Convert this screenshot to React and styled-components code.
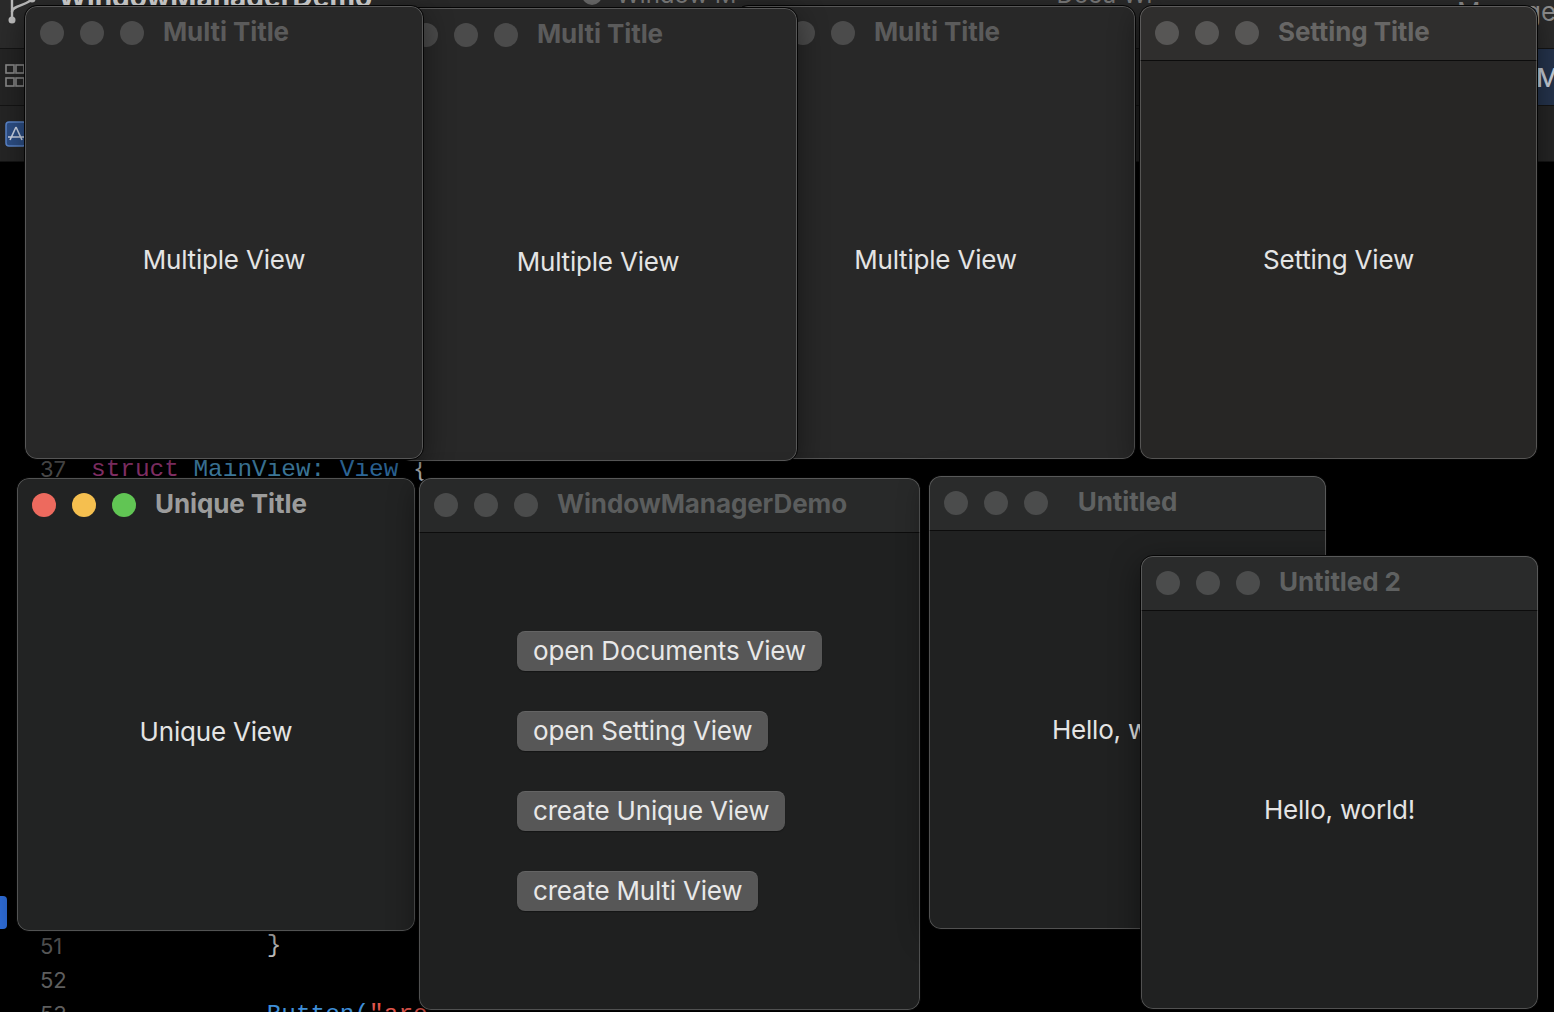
import React from "react";
import styled, { createGlobalStyle } from "styled-components";

const Global = createGlobalStyle`
  html, body { margin: 0; padding: 0; background: #000; }
  body { width: 1554px; height: 1012px; overflow: hidden; font-family: Inter, "Noto Sans", sans-serif; }
  #root { width: 1554px; height: 1012px; }
`;

const Desktop = styled.div`
  position: relative;
  width: 1554px;
  height: 1012px;
  overflow: hidden;
  background: #000;
`;

/* ---------- Xcode backdrop ---------- */
const Backdrop = styled.div`
  display: flex;
  flex-direction: column;
  width: 100%;
  height: 100%;
`;

const TopBar = styled.div`
  height: 48px;
  flex: none;
  display: flex;
  align-items: flex-start;
  background: #2b2b2b;
  border-bottom: 1px solid #141414;
  overflow: hidden;
`;

const Branch = styled.svg`
  flex: none;
  margin-left: 8px;
  margin-top: -4px;
`;

const ProjectName = styled.div`
  margin-left: 20px;
  margin-top: -20px;
  font-size: 28px;
  font-weight: 700;
  color: #d8d8d8;
`;

const TabHint = styled.div`
  display: flex;
  align-items: center;
  gap: 14px;
  margin-left: ${(p) => p.$ml}px;
  margin-top: -20px;
  font-size: 24px;
  color: #7c7c7c;
  white-space: nowrap;
`;

const HintDot = styled.span`
  width: 20px;
  height: 20px;
  border-radius: 50%;
  background: #6a6a6a;
`;

const RightHint = styled.div`
  margin-left: auto;
  margin-right: -12px;
  margin-top: -4px;
  font-size: 26px;
  color: #8e8e8e;
  white-space: nowrap;
`;

const Bar = styled.div`
  height: ${(p) => p.$h}px;
  flex: none;
  display: flex;
  align-items: center;
  justify-content: space-between;
  background: ${(p) => p.$bg};
  border-bottom: 1px solid #141414;
  overflow: hidden;
`;

const BarIcon = styled.svg`
  flex: none;
  margin-left: 5px;
`;

const EditorTab = styled.div`
  flex: none;
  width: 220px;
  margin-right: -202px;
  align-self: stretch;
  display: flex;
  align-items: center;
  background: #25344d;
  color: #c9d0db;
  font-size: 26px;
  font-weight: 500;
`;

const Editor = styled.div`
  flex: 1;
  position: relative;
  background: #000;
  padding-top: 290px;
`;

const Marker = styled.div`
  position: absolute;
  left: 0;
  top: 734px;
  width: 7px;
  height: 33px;
  border-radius: 0 4px 4px 0;
  background: #2f6edb;
`;

const CodeLine = styled.div`
  height: 34.07px;
  display: flex;
  align-items: center;
  white-space: pre;
`;

const LineNo = styled.span`
  width: 40px;
  padding-left: 40px;
  flex: none;
  font-family: Inter, sans-serif;
  font-size: 22px;
  color: #5e5e5e;
`;

const Code = styled.span`
  margin-left: 11px;
  font-family: "Liberation Mono", "DejaVu Sans Mono", monospace;
  font-size: 24.4px;
  color: #d9d9d9;
`;

const Tok = styled.span`
  color: ${(p) => p.$c};
`;

/* ---------- Windows ---------- */
const Win = styled.div`
  position: absolute;
  left: ${(p) => p.$x}px;
  top: ${(p) => p.$y}px;
  width: ${(p) => p.$w}px;
  height: ${(p) => p.$h}px;
  z-index: ${(p) => p.$z};
  box-sizing: border-box;
  display: flex;
  flex-direction: column;
  border: 1px solid #050505;
  border-radius: 13px;
  background: ${(p) => p.$body};
  overflow: hidden;
  box-shadow: 0 8px 30px rgba(0, 0, 0, 0.45);
  &::after {
    content: "";
    position: absolute;
    inset: 0;
    border-radius: 12px;
    box-shadow: inset 0 0 0 1px rgba(255, 255, 255, 0.22);
    pointer-events: none;
  }
`;

const TitleBar = styled.div`
  flex: none;
  height: 54px;
  display: flex;
  align-items: center;
  padding: 0 15px;
  background: ${(p) => p.$bg || "transparent"};
  border-bottom: 1px solid ${(p) => (p.$sep ? "#0c0c0c" : "transparent")};
`;

const Lights = styled.div`
  flex: none;
  display: flex;
  gap: 16px;
  margin-top: -1px;
`;

const Light = styled.span`
  width: 24px;
  height: 24px;
  border-radius: 50%;
  background: ${(p) => p.$c};
`;

const Title = styled.div`
  flex: 1 0 auto;
  padding: 0 19px;
  margin-top: -3px;
  text-align: center;
  font-size: 26px;
  font-weight: 700;
  color: ${(p) => p.$c};
  white-space: nowrap;
  letter-spacing: -0.1px;
`;

const TitleBalance = styled.span`
  flex: 0 1 104px;
  min-width: 0;
`;

const Body = styled.div`
  flex: 1;
  display: flex;
  align-items: center;
  justify-content: center;
  color: #e4e4e4;
  font-size: 26px;
  letter-spacing: -0.2px;
  white-space: nowrap;
  padding-bottom: 2px;
`;

const ButtonStack = styled.div`
  display: flex;
  flex-direction: column;
  align-items: flex-start;
  gap: 40px;
`;

const MacButton = styled.button`
  height: 40px;
  padding: 0 16px;
  border: none;
  border-radius: 8px;
  background: #575757;
  box-shadow: inset 0 1px 0 rgba(255, 255, 255, 0.08), 0 1px 1px rgba(0, 0, 0, 0.35);
  color: #e8e8e8;
  font-family: Inter, sans-serif;
  font-size: 26px;
  letter-spacing: -0.2px;
  line-height: 40px;
  white-space: nowrap;
`;

const INACTIVE = ["#4b4b4b", "#4b4b4b", "#4b4b4b"];
const ACTIVE = ["#ed6a5e", "#f5bf4f", "#61c554"];

function MacWindow({ x, y, w, h, z, title, titleColor, body, bar, sep, lights = INACTIVE, lightColor, children }) {
  const lc = lightColor ? [lightColor, lightColor, lightColor] : lights;
  return (
    <Win $x={x} $y={y} $w={w} $h={h} $z={z} $body={body}>
      <TitleBar $bg={bar} $sep={sep}>
        <Lights>
          {lc.map((c, i) => (
            <Light key={i} $c={c} />
          ))}
        </Lights>
        <Title $c={titleColor}>{title}</Title>
        <TitleBalance />
      </TitleBar>
      <Body>{children}</Body>
    </Win>
  );
}

const lines = [
  { n: 37, code: [["struct ", "#a93e84"], ["MainView: ", "#4f9cc8"], ["View ", "#3c88c8"], ["{", "#dcdcdc"]] },
  ...Array.from({ length: 13 }, (_, i) => ({ n: 38 + i, code: [] })),
  { n: 51, code: [["            }", "#c8c8c8"]] },
  { n: 52, code: [] },
  { n: 53, code: [["            Button(", "#3f8fd9"], ["\"are", "#e0564d"]] },
];

export default function App() {
  return (
    <>
      <Global />
      <Desktop>
        <Backdrop>
          <TopBar>
            <Branch width="30" height="30" viewBox="0 0 30 30">
              <g stroke="#bdbdbd" strokeWidth="2.4" fill="none">
                <path d="M4 0 V24" />
                <path d="M24 0 C24 10 4 8 4 16" />
              </g>
              <circle cx="4" cy="24" r="3.5" fill="#bdbdbd" />
              <circle cx="24" cy="3" r="3.5" fill="#bdbdbd" />
            </Branch>
            <ProjectName>WindowManagerDemo</ProjectName>
            <TabHint $ml={210}>
              <HintDot />
              Window M
            </TabHint>
            <TabHint $ml={320}>Docu Wi</TabHint>
            <RightHint>Manager</RightHint>
          </TopBar>
          <Bar $h={56} $bg="#242424">
            <BarIcon width="20" height="28" viewBox="0 0 20 28">
              <g stroke="#8a8a8a" strokeWidth="1.6" fill="none">
                <rect x="1" y="2" width="8" height="8" />
                <rect x="11" y="2" width="8" height="8" />
                <rect x="1" y="15" width="8" height="8" />
                <rect x="11" y="15" width="8" height="8" />
              </g>
            </BarIcon>
            <EditorTab>MainView</EditorTab>
          </Bar>
          <Bar $h={55} $bg="#252525">
            <BarIcon width="22" height="26" viewBox="0 0 22 26">
              <rect x="1" y="1" width="20" height="24" rx="3" fill="#2d4f86" stroke="#5b86cc" strokeWidth="1.5" />
              <path d="M11 6 L5 19 M11 6 L17 19 M3 16 H19" stroke="#cfd8e8" strokeWidth="1.6" fill="none" />
            </BarIcon>
            <div />
          </Bar>
          <Editor>
            <Marker />
            {lines.map((l) => (
              <CodeLine key={l.n}>
                <LineNo>{l.n}</LineNo>
                <Code>
                  {l.code.map(([t, c], i) => (
                    <Tok key={i} $c={c}>
                      {t}
                    </Tok>
                  ))}
                </Code>
              </CodeLine>
            ))}
          </Editor>
        </Backdrop>

        <MacWindow x={735} y={5} w={401} h={455} z={1} title="Multi Title" titleColor="#5b5b5b" body="#282828">
          Multiple View
        </MacWindow>
        <MacWindow x={398} y={7} w={400} h={455} z={2} title="Multi Title" titleColor="#5b5b5b" body="#282828">
          Multiple View
        </MacWindow>
        <MacWindow x={24} y={5} w={400} h={455} z={3} title="Multi Title" titleColor="#5b5b5b" body="#282828">
          Multiple View
        </MacWindow>
        <MacWindow
          x={1139}
          y={5}
          w={399}
          h={455}
          z={3}
          title="Setting Title"
          titleColor="#676665"
          body="#272625"
          bar="#2f2e2d"
          sep
          lightColor="#575655"
        >
          Setting View
        </MacWindow>

        <MacWindow
          x={16}
          y={477}
          w={400}
          h={455}
          z={3}
          title="Unique Title"
          titleColor="#9c9c9c"
          body="#222323"
          lights={ACTIVE}
        >
          Unique View
        </MacWindow>
        <MacWindow
          x={418}
          y={477}
          w={503}
          h={534}
          z={3}
          title="WindowManagerDemo"
          titleColor="#5b5d5d"
          body="#1f2020"
          bar="#282929"
          sep
          lightColor="#4a4b4b"
        >
          <ButtonStack>
            <MacButton>open Documents View</MacButton>
            <MacButton>open Setting View</MacButton>
            <MacButton>create Unique View</MacButton>
            <MacButton>create Multi View</MacButton>
          </ButtonStack>
        </MacWindow>
        <MacWindow
          x={928}
          y={475}
          w={399}
          h={455}
          z={3}
          title="Untitled"
          titleColor="#5f6161"
          body="#202121"
          bar="#2a2b2b"
          sep
          lightColor="#4b4c4c"
        >
          Hello, world!
        </MacWindow>
        <MacWindow
          x={1140}
          y={555}
          w={399}
          h={455}
          z={4}
          title="Untitled 2"
          titleColor="#5f6161"
          body="#202121"
          bar="#2a2b2b"
          sep
          lightColor="#4b4c4c"
        >
          Hello, world!
        </MacWindow>
      </Desktop>
    </>
  );
}
